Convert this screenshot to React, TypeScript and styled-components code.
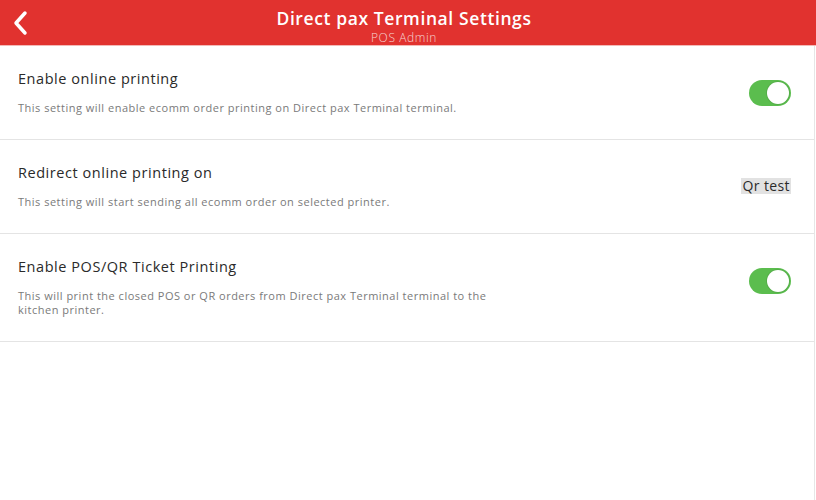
import React from "react";
import styled, { createGlobalStyle } from "styled-components";

const Global = createGlobalStyle`
  html, body { margin: 0; padding: 0; background: #fff; }
  body { font-family: "Open Sans", "Noto Sans", sans-serif; }
  * { box-sizing: border-box; }
`;

const Page = styled.div`
  width: 816px;
  height: 500px;
  display: flex;
  flex-direction: column;
  background: #fff;
  overflow: hidden;
`;

const Header = styled.header`
  height: 46px;
  background: #e1322f;
  display: grid;
  grid-template-columns: 60px 1fr 68px;
  align-items: start;
  color: #fff;
  border-bottom: 1px solid #f3b9b7;
`;

const BackButton = styled.button`
  background: none;
  border: 0;
  padding: 0 0 0 12px;
  height: 45px;
  display: flex;
  align-items: center;
  cursor: pointer;
`;

const TitleBlock = styled.div`
  display: flex;
  flex-direction: column;
  align-items: center;
  padding-top: 8px;
`;

const Title = styled.div`
  font-size: 17.5px;
  font-weight: 600;
  line-height: 20px;
  letter-spacing: 0.6px;
`;

const Subtitle = styled.div`
  margin-top: 3px;
  font-size: 12px;
  line-height: 13px;
  color: #f6d2d1;
  font-weight: 300;
  letter-spacing: 0.6px;
`;

const Body = styled.div`
  flex: 1;
  border-right: 1px solid #e6e6e6;
  margin-right: 1px;
`;

const Row = styled.div<{ $h: number }>`
  height: ${(p) => p.$h}px;
  display: flex;
  align-items: flex-start;
  justify-content: space-between;
  padding: 23px 23px 0 18px;
  border-bottom: 1px solid #e4e4e4;
`;

const Texts = styled.div`
  display: flex;
  flex-direction: column;
  gap: 12px;
  max-width: 492px;
`;

const RowTitle = styled.div`
  font-size: 14.5px;
  color: #2a2a2a;
  line-height: 20px;
  letter-spacing: 0.55px;
`;

const RowDesc = styled.div`
  font-size: 11px;
  color: #7a7a7a;
  line-height: 14px;
  letter-spacing: 0.5px;
`;

const Toggle = styled.div<{ $on: boolean }>`
  margin-top: 11px;
  width: 42px;
  height: 26px;
  border-radius: 13px;
  background: ${(p) => (p.$on ? "#5bbd4e" : "#ccc")};
  display: flex;
  align-items: center;
  justify-content: ${(p) => (p.$on ? "flex-end" : "flex-start")};
  padding: 2px;
`;

const Knob = styled.div`
  width: 22px;
  height: 22px;
  border-radius: 50%;
  background: #fff;
  box-shadow: 0 0 0 1px rgba(0, 0, 0, 0.08);
`;

const Value = styled.div`
  margin-top: 15px;
  background: #e2e2e2;
  color: #2a2a2a;
  font-size: 14px;
  line-height: 16px;
  padding: 0 1px;
  letter-spacing: 0.4px;
`;

export default function App() {
  return (
    <Page>
      <Global />
      <Header>
        <BackButton aria-label="Back">
          <svg width="18" height="26" viewBox="0 0 18 26">
            <path d="M13 3 L4 13 L13 23" fill="none" stroke="#fff" strokeWidth="3.5" strokeLinecap="round" strokeLinejoin="round" />
          </svg>
        </BackButton>
        <TitleBlock>
          <Title>Direct pax Terminal Settings</Title>
          <Subtitle>POS Admin</Subtitle>
        </TitleBlock>
        <div />
      </Header>
      <Body>
        <Row $h={94}>
          <Texts>
            <RowTitle>Enable online printing</RowTitle>
            <RowDesc>This setting will enable ecomm order printing on Direct pax Terminal terminal.</RowDesc>
          </Texts>
          <Toggle $on>
            <Knob />
          </Toggle>
        </Row>
        <Row $h={94}>
          <Texts>
            <RowTitle>Redirect online printing on</RowTitle>
            <RowDesc>This setting will start sending all ecomm order on selected printer.</RowDesc>
          </Texts>
          <Value>Qr test</Value>
        </Row>
        <Row $h={108}>
          <Texts>
            <RowTitle>Enable POS/QR Ticket Printing</RowTitle>
            <RowDesc>This will print the closed POS or QR orders from Direct pax Terminal terminal to the kitchen printer.</RowDesc>
          </Texts>
          <Toggle $on>
            <Knob />
          </Toggle>
        </Row>
      </Body>
    </Page>
  );
}
